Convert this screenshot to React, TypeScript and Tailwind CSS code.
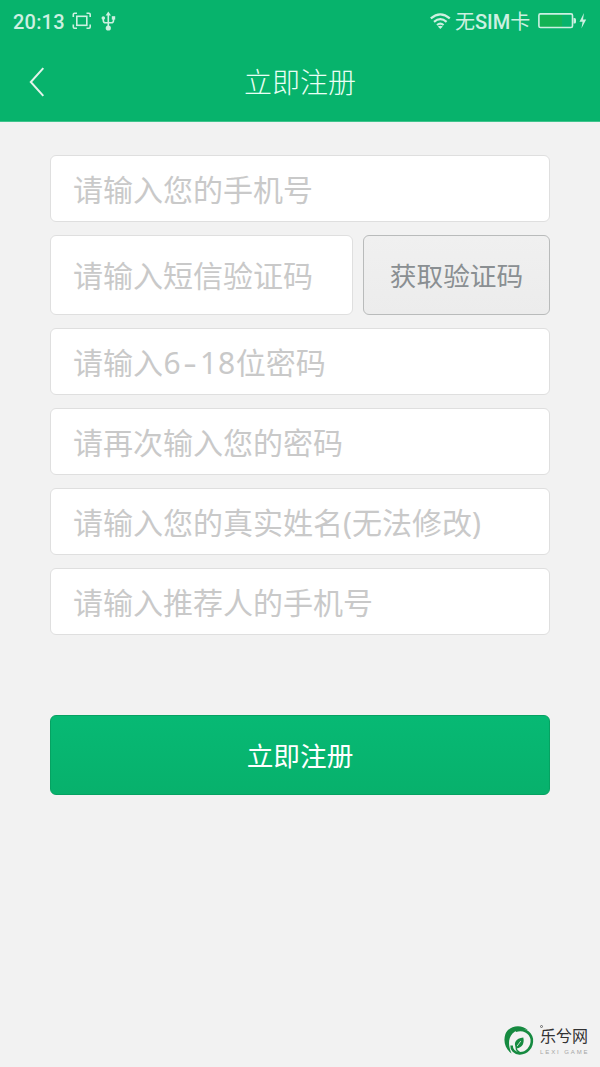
import type { ReactNode } from "react";

const cjk = "font-['Noto_Sans','Noto_Sans_CJK_SC',sans-serif]";

function StatusBar() {
  return (
    <div className="flex h-[42px] items-center justify-between pl-[13px] pr-[13px] text-[#cdf0e1]">
      <div className="flex items-center">
        <span className="w-[59px] pt-[1px] font-['Roboto',sans-serif] text-[20px] font-medium leading-[42px] tracking-[0.2px]">
          20:13
        </span>
        <svg width="20" height="18" viewBox="0 0 20 18" fill="none" stroke="currentColor" strokeWidth="1.6">
          <path d="M1.3 5V2.5Q1.3 1.3 2.5 1.3H5M14.5 1.3H17Q18.2 1.3 18.2 2.5V5M18.2 12.5V15Q18.2 16.2 17 16.2H14.5M5 16.2H2.5Q1.3 16.2 1.3 15V12.5" />
          <rect x="4.8" y="4.3" width="10" height="9" />
        </svg>
        <svg className="ml-[9px]" width="16" height="20" viewBox="0 0 16 20" fill="none" stroke="currentColor" strokeWidth="1.6">
          <path d="M7.3 3V16M2.3 7V9.5Q2.3 11.8 4.5 11.8H10.2Q12.5 11.8 12.5 9.5V7" />
          <path d="M7.3 0.5L10 4.5H4.6Z" fill="currentColor" stroke="none" />
          <circle cx="7.3" cy="17" r="2.6" fill="currentColor" stroke="none" />
          <circle cx="2.3" cy="7" r="1.8" fill="currentColor" stroke="none" />
          <rect x="10.8" y="5.2" width="3.4" height="3.4" fill="currentColor" stroke="none" />
        </svg>
      </div>
      <div className="flex items-center">
        <svg width="21" height="17" viewBox="0 0 21 17" fill="none" stroke="currentColor" strokeWidth="2.2">
          <path d="M0.8 5.4Q10.3 -2.6 19.8 5.4M4 8.8Q10.3 3.6 16.6 8.8M7 12Q10.3 9.4 13.6 12" />
          <path d="M10.3 16L7.8 13.6Q10.3 11.8 12.8 13.6Z" fill="currentColor" stroke="none" />
        </svg>
        <span className="ml-[4px] w-[79px] whitespace-nowrap pt-[2px] font-['Roboto','Noto_Sans_CJK_SC',sans-serif] text-[20px] leading-[40px]">
          无<span className="font-medium">SIM</span>卡
        </span>
        <svg className="ml-[4px]" width="49" height="18" viewBox="0 0 49 18" fill="none">
          <rect x="2" y="3" width="22" height="12" fill="#14b355" />
          <rect x="0.9" y="1.9" width="33.6" height="13.6" rx="1.5" stroke="currentColor" strokeWidth="1.6" />
          <path d="M35.5 6H36.5Q38 6 38 7.5V10Q38 11.5 36.5 11.5H35.5Z" fill="currentColor" />
          <path d="M46 1L41.5 9.8H44.6L43.4 16.5L48.2 7.4H45Z" fill="currentColor" />
        </svg>
      </div>
    </div>
  );
}

function Header() {
  return (
    <header className="h-[122px] border-b border-[#3fc48d] bg-[#07b36c]">
      <StatusBar />
      <div className="grid h-[79px] grid-cols-[60px_1fr_60px] items-center">
        <svg className="ml-[29px]" width="16" height="30" viewBox="0 0 16 30" fill="none" stroke="#e3f3ea" strokeWidth="2">
          <path d="M14.3 1.2L1.8 15L14.3 28.8" />
        </svg>
        <h1 className="text-center text-[28px] font-light leading-[40px] text-[#eafff5]">立即注册</h1>
      </div>
    </header>
  );
}

function Field({ children, className = "h-[67px]" }: { children: ReactNode; className?: string }) {
  return (
    <div
      className={`flex items-center whitespace-nowrap rounded-[6px] border border-[#dfdfdf] bg-white pl-[22px] pt-[2px] text-[30px] leading-[44px] text-[#c9c9c9] ${className}`}
    >
      <span>{children}</span>
    </div>
  );
}

// latin digits take a fixed 18px cell each
function Mono({ text }: { text: string }) {
  return (
    <>
      {text.split("").map((c, i) => (
        <span key={i} className={`inline-block w-[18.2px] text-center ${c === "-" ? "scale-x-140" : ""}`}>
          {c}
        </span>
      ))}
    </>
  );
}

function Logo() {
  return (
    <div className="flex items-center">
      <svg width="30" height="31" viewBox="0 0 30 31" fill="none">
        <path
          d="M24 5.2C17 -1.5 5 0.5 1.4 9C-1 16 1 24 7.6 28.6C4.5 22 3.5 14 8.5 8.5C12.5 4 18.5 3.2 24 5.2Z"
          fill="#168a40"
        />
        <path
          d="M11.5 5.8C19 3.2 26.3 6.8 27.8 14C28.6 22.5 22.5 28.6 15.5 28.4C10.5 28 7.3 24.5 7.6 20.5"
          stroke="#168a40"
          strokeWidth="2.6"
        />
        <path d="M19.3 12.4C11.5 13 8.8 18.5 12.6 23.4C18.8 22.4 20.5 17.8 19.3 12.4Z" fill="#168a40" />
        <path d="M16.8 16L12.8 21.5" stroke="#f2f2f2" strokeWidth="0.8" />
        <path d="M12.6 21C11.6 23.5 12.5 26.2 15.5 26.8" stroke="#168a40" strokeWidth="1.3" />
      </svg>
      <div className="ml-[6px] w-[50px]">
        <div className="relative text-[16px] leading-[20px] text-[#333]">
          <span className="absolute -top-[1px] left-[0px] h-[3px] w-[3px] rounded-full border border-[#666]" />
          乐兮网
        </div>
        <div className="mt-[2px] whitespace-nowrap font-['Liberation_Sans',sans-serif] text-[6px] leading-[8px] tracking-[1.9px] text-[#a5a5a5]">
          LEXI GAME
        </div>
      </div>
    </div>
  );
}

export default function App() {
  return (
    <div className={`flex h-[1067px] w-[600px] flex-col overflow-hidden bg-[#f2f2f2] ${cjk}`}>
      <Header />
      <main className="flex flex-col gap-[13px] px-[50px] pt-[33px]">
        <Field>请输入您的手机号</Field>
        <div className="flex gap-[10px]">
          <Field className="h-[80px] w-[303px]">请输入短信验证码</Field>
          <button className="h-[80px] flex-1 rounded-[6px] border border-[#b9bbbb] bg-linear-to-b from-[#f0f0f0] to-[#ececec] pt-[2px] text-[26.67px] text-[#8a8f92]">
            获取验证码
          </button>
        </div>
        <Field>
          请输入
          <Mono text="6-18" />
          位密码
        </Field>
        <Field>请再次输入您的密码</Field>
        <Field>请输入您的真实姓名(无法修改)</Field>
        <Field>请输入推荐人的手机号</Field>
        <button className="mt-[67px] h-[80px] rounded-[6px] border border-[#06a262] bg-linear-to-b from-[#07b974] to-[#07b16c] pt-[2px] text-[26.67px] text-white">
          立即注册
        </button>
      </main>
      <footer className="mt-auto flex justify-end pb-[11px] pr-[10px]">
        <Logo />
      </footer>
    </div>
  );
}
